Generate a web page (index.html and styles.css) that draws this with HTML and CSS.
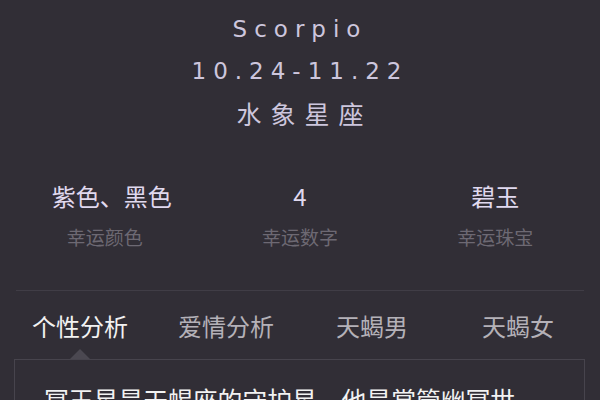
FILE: index.html
```html
<!DOCTYPE html>
<html>
<head>
<meta charset="utf-8">
<link rel="stylesheet" href="styles.css">
</head>
<body>
<div class="page">
  <div class="head">
    <div class="en">Scorpio</div>
    <div class="date">10.24-11.22</div>
    <div class="elem">水象星座</div>
  </div>
  <div class="lucky">
    <div class="item first"><div class="val">紫色、黑色</div><div class="lab">幸运颜色</div></div>
    <div class="item"><div class="val">4</div><div class="lab">幸运数字</div></div>
    <div class="item"><div class="val">碧玉</div><div class="lab">幸运珠宝</div></div>
  </div>
  <div class="divider"></div>
  <div class="tabs">
    <div class="tab active">个性分析</div>
    <div class="tab">爱情分析</div>
    <div class="tab">天蝎男</div>
    <div class="tab">天蝎女</div>
  </div>
  <div class="box">
    <p class="text">冥王星是天蝎座的守护星，他是掌管幽冥世界的神。</p>
  </div>
</div>
</body>
</html>
```
FILE: styles.css
```css
html, body {
  margin: 0;
  padding: 0;
  background: #312e36;
  width: 600px;
  height: 400px;
  overflow: hidden;
}
.page {
  font-family: "Noto Sans CJK SC", "Noto Sans", sans-serif;
  color: #d8d2e6;
}
.head {
  padding-top: 13px;
  text-align: center;
  color: #cdc6dd;
}
.en, .date {
  font-family: "DejaVu Sans", sans-serif;
  font-size: 23px;
  letter-spacing: 7px;
  line-height: 32px;
  padding-left: 0;
}
.date {
  margin-top: 10px;
}
.elem {
  font-size: 25px;
  letter-spacing: 9px;
  line-height: 34px;
  margin-top: 9px;
  padding-left: 9px;
}
.lucky {
  display: grid;
  grid-template-columns: 1fr 1fr 1fr;
  padding: 0 7px;
  margin-top: 51px;
  text-align: center;
}
.val {
  font-size: 24px;
  line-height: 30px;
  color: #e0d9ef;
}
.first .val {
  padding-left: 14px;
}
.lab {
  font-size: 19px;
  line-height: 24px;
  margin-top: 14px;
  color: #6d6973;
}
.divider {
  height: 1px;
  background: #403d46;
  margin: 41px 16px 0;
}
.tabs {
  display: grid;
  grid-template-columns: repeat(4, 146px);
  padding-left: 7px;
  margin-top: 18px;
  text-align: center;
}
.tab {
  font-size: 24px;
  line-height: 34px;
  color: #b4b1b8;
}
.tab.active {
  color: #f2f2f2;
}
.box {
  position: relative;
  margin: 16px 15px 0 14px;
  border: 1px solid #47444d;
  border-bottom: none;
  height: 60px;
  padding: 24px 60px 0 29px;
}
.box::before {
  content: "";
  position: absolute;
  top: -11px;
  left: 55px;
  border-left: 10px solid transparent;
  border-right: 10px solid transparent;
  border-bottom: 10px solid #4b4851;
}
.text {
  margin: 0;
  font-size: 24.8px;
  line-height: 30px;
  color: #f2f2f2;
}
```
